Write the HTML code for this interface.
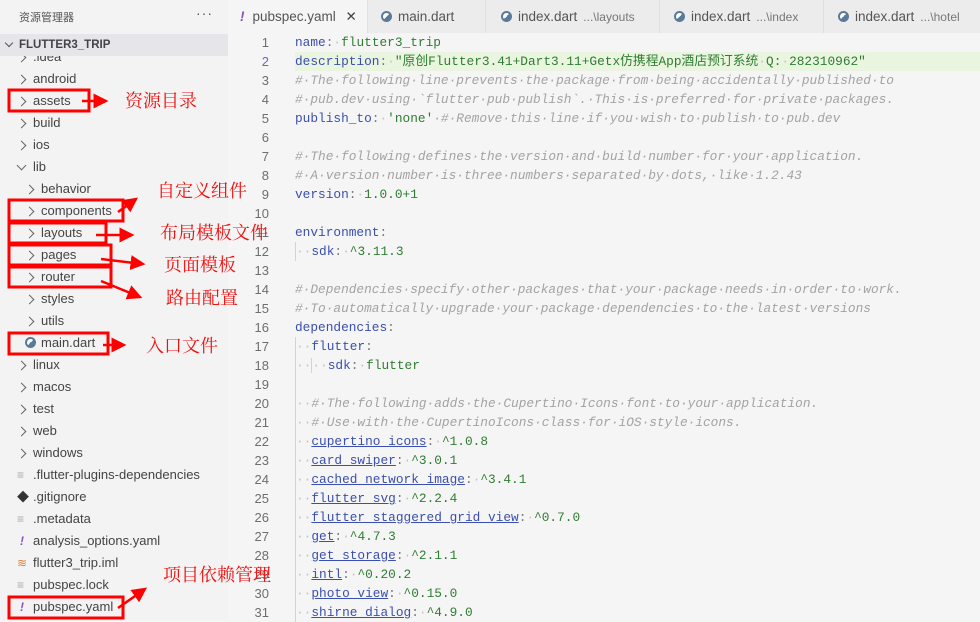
<!DOCTYPE html>
<html><head><meta charset="utf-8"><style>
*{margin:0;padding:0;box-sizing:border-box}
body{width:980px;height:620px;overflow:hidden;background:#f5f5f5;position:relative;font-family:"Liberation Sans","Noto Sans CJK SC",sans-serif}
#side{position:absolute;left:0;top:0;width:228px;height:620px;background:#f3f3f3}
.hdr{position:absolute;left:19px;top:9px;font-size:11px;color:#555}
.dots{position:absolute;left:196px;top:5px;font-size:14px;color:#555;letter-spacing:1px}
.proj{position:absolute;left:0;top:34px;width:228px;height:22px;background:#e5e5ea;font-size:11.5px;font-weight:bold;color:#444;line-height:22px;padding-left:19px;z-index:2}
.proj:before{content:"";position:absolute;left:6px;top:6px;width:5px;height:5px;border-right:1.3px solid #555;border-bottom:1.3px solid #555;transform:rotate(45deg)}
.it{position:absolute;height:22px;line-height:22px;font-size:13px;color:#444;white-space:nowrap}
.ch:before{content:"";position:absolute;left:-15px;top:8px;width:6px;height:6px;border-right:1.2px solid #666;border-top:1.2px solid #666;transform:rotate(45deg)}
.chd:before{content:"";position:absolute;left:-15px;top:6px;width:6px;height:6px;border-right:1.2px solid #666;border-bottom:1.2px solid #666;transform:rotate(45deg)}
.ic{position:absolute;left:-16px;top:0;font-size:12px}
#tabs{position:absolute;left:228px;top:0;width:752px;height:33px;background:#ececec}
.tab{position:absolute;top:0;height:33px;line-height:33px;font-size:13.5px;color:#555;border-right:1px solid #e0e0e0;white-space:nowrap}
.tab small{font-size:12px;color:#777;margin-left:6px}
.dart{display:inline-block;width:11px;height:11px;border-radius:50%;border:2px solid #5a7a9a;margin-right:6px;vertical-align:-1px;background:linear-gradient(135deg,#fff 50%,#5a7a9a 50%)}
#code{position:absolute;left:228px;top:33px;width:752px;font-family:"Liberation Mono","Noto Sans CJK SC",monospace;font-size:12.8px}
.ln{position:relative;height:19px;line-height:19px;white-space:pre}
.n{position:absolute;left:0;width:41px;text-align:right;color:#6e6e6e;font-family:"Liberation Sans",sans-serif;font-size:13px}
.t{position:absolute;left:67px}
.k{color:#3b4fae}.v{color:#2f7d32}.c{color:#a3a3a3;font-style:italic}.d{color:#c4c4c4}.p{color:#777}
.u{color:#3b4fae;text-decoration:underline;text-decoration-color:#3b4fae}
.hl{background:#e9f5df}
.g{border-left:1px solid #d3d3d3}
.ann{position:absolute;color:#f01010;font-family:"Noto Serif CJK SC","Liberation Serif",serif;font-size:18px;white-space:nowrap;line-height:20px}
</style></head><body>
<div id="side">
<div class="hdr">资源管理器</div><div class="dots">···</div>
<div class="proj">FLUTTER3_TRIP</div>
<div class="it ch" style="left:33px;top:46px">.idea</div>
<div class="it ch" style="left:33px;top:68px">android</div>
<div class="it ch" style="left:33px;top:90px">assets</div>
<div class="it ch" style="left:33px;top:112px">build</div>
<div class="it ch" style="left:33px;top:134px">ios</div>
<div class="it chd" style="left:33px;top:156px">lib</div>
<div class="it ch" style="left:41px;top:178px">behavior</div>
<div class="it ch" style="left:41px;top:200px">components</div>
<div class="it ch" style="left:41px;top:222px">layouts</div>
<div class="it ch" style="left:41px;top:244px">pages</div>
<div class="it ch" style="left:41px;top:266px">router</div>
<div class="it ch" style="left:41px;top:288px">styles</div>
<div class="it ch" style="left:41px;top:310px">utils</div>
<div class="it" style="left:41px;top:332px"><span class="ic" style="top:5px;width:11px;height:11px;border-radius:50%;border:2px solid #5a7a9a;background:linear-gradient(135deg,#fff 50%,#5a7a9a 50%)"></span>main.dart</div>
<div class="it ch" style="left:33px;top:354px">linux</div>
<div class="it ch" style="left:33px;top:376px">macos</div>
<div class="it ch" style="left:33px;top:398px">test</div>
<div class="it ch" style="left:33px;top:420px">web</div>
<div class="it ch" style="left:33px;top:442px">windows</div>
<div class="it" style="left:33px;top:464px"><span class="ic" style="color:#aaa">≡</span>.flutter-plugins-dependencies</div>
<div class="it" style="left:33px;top:486px"><span class="ic" style="color:#333">◆</span>.gitignore</div>
<div class="it" style="left:33px;top:508px"><span class="ic" style="color:#aaa">≡</span>.metadata</div>
<div class="it" style="left:33px;top:530px"><span class="ic" style="color:#8a4fb8;font-weight:bold;font-style:italic;left:-13px">!</span>analysis_options.yaml</div>
<div class="it" style="left:33px;top:552px"><span class="ic" style="color:#e0823a">≋</span>flutter3_trip.iml</div>
<div class="it" style="left:33px;top:574px"><span class="ic" style="color:#aaa">≡</span>pubspec.lock</div>
<div class="it" style="left:33px;top:596px"><span class="ic" style="color:#8a4fb8;font-weight:bold;font-style:italic;left:-13px">!</span>pubspec.yaml</div>
</div>
<div id="tabs">
<div class="tab" style="left:0;width:140px;background:#f5f5f5;padding-left:12px"><span style="color:#8a4fb8;font-weight:bold;font-style:italic;margin-right:8px">!</span>pubspec.yaml <span style="margin-left:6px;color:#444">✕</span></div>
<div class="tab" style="left:140px;width:118px;padding-left:13px"><span class="dart"></span>main.dart</div>
<div class="tab" style="left:258px;width:174px;padding-left:15px"><span class="dart"></span>index.dart<small>...\layouts</small></div>
<div class="tab" style="left:432px;width:164px;padding-left:14px"><span class="dart"></span>index.dart<small>...\index</small></div>
<div class="tab" style="left:596px;width:156px;padding-left:14px;border:none"><span class="dart"></span>index.dart<small>...\hotel</small></div>
</div>
<div id="code">
<div class="ln" style="margin-top:0"><span class="n">1</span><span class="t"><span class="k">name</span><span class="p">:</span><span class="d">·</span><span class="v">flutter3_trip</span></span></div>
<div class="ln"><span class="n" style="color:#7a5fc0">2</span><span class="t hl" style="width:685px"><span class="k">description</span><span class="p">:</span><span class="d">·</span><span class="v">"原创Flutter3.41+Dart3.11+Getx仿携程App酒店预订系统<span class="d">·</span>Q:<span class="d">·</span>282310962"</span></span></div>
<div class="ln"><span class="n">3</span><span class="t c">#·The·following·line·prevents·the·package·from·being·accidentally·published·to</span></div>
<div class="ln"><span class="n">4</span><span class="t c">#·pub.dev·using·`flutter·pub·publish`.·This·is·preferred·for·private·packages.</span></div>
<div class="ln"><span class="n">5</span><span class="t"><span class="k">publish_to</span><span class="p">:</span><span class="d">·</span><span class="v">'none'</span><span class="c">·#·Remove·this·line·if·you·wish·to·publish·to·pub.dev</span></span></div>
<div class="ln"><span class="n">6</span></div>
<div class="ln"><span class="n">7</span><span class="t c">#·The·following·defines·the·version·and·build·number·for·your·application.</span></div>
<div class="ln"><span class="n">8</span><span class="t c">#·A·version·number·is·three·numbers·separated·by·dots,·like·1.2.43</span></div>
<div class="ln"><span class="n">9</span><span class="t"><span class="k">version</span><span class="p">:</span><span class="d">·</span><span class="v">1.0.0+1</span></span></div>
<div class="ln"><span class="n">10</span></div>
<div class="ln"><span class="n">11</span><span class="t"><span class="k">environment</span><span class="p">:</span></span></div>
<div class="ln"><span class="n">12</span><span class="t g"><span class="d">··</span><span class="k">sdk</span><span class="p">:</span><span class="d">·</span><span class="v">^3.11.3</span></span></div>
<div class="ln"><span class="n">13</span></div>
<div class="ln"><span class="n">14</span><span class="t c">#·Dependencies·specify·other·packages·that·your·package·needs·in·order·to·work.</span></div>
<div class="ln"><span class="n">15</span><span class="t c">#·To·automatically·upgrade·your·package·dependencies·to·the·latest·versions</span></div>
<div class="ln"><span class="n">16</span><span class="t"><span class="k">dependencies</span><span class="p">:</span></span></div>
<div class="ln"><span class="n">17</span><span class="t g"><span class="d">··</span><span class="k">flutter</span><span class="p">:</span></span></div>
<div class="ln"><span class="n">18</span><span class="t g"><span class="d">··</span><span class="g"><span class="d">··</span></span><span class="k">sdk</span><span class="p">:</span><span class="d">·</span><span class="v">flutter</span></span></div>
<div class="ln"><span class="n">19</span><span class="t g">&nbsp;</span></div>
<div class="ln"><span class="n">20</span><span class="t g"><span class="d">··</span><span class="c">#·The·following·adds·the·Cupertino·Icons·font·to·your·application.</span></span></div>
<div class="ln"><span class="n">21</span><span class="t g"><span class="d">··</span><span class="c">#·Use·with·the·CupertinoIcons·class·for·iOS·style·icons.</span></span></div>
<div class="ln"><span class="n">22</span><span class="t g"><span class="d">··</span><span class="u">cupertino_icons</span><span class="p">:</span><span class="d">·</span><span class="v">^1.0.8</span></span></div>
<div class="ln"><span class="n">23</span><span class="t g"><span class="d">··</span><span class="u">card_swiper</span><span class="p">:</span><span class="d">·</span><span class="v">^3.0.1</span></span></div>
<div class="ln"><span class="n">24</span><span class="t g"><span class="d">··</span><span class="u">cached_network_image</span><span class="p">:</span><span class="d">·</span><span class="v">^3.4.1</span></span></div>
<div class="ln"><span class="n">25</span><span class="t g"><span class="d">··</span><span class="u">flutter_svg</span><span class="p">:</span><span class="d">·</span><span class="v">^2.2.4</span></span></div>
<div class="ln"><span class="n">26</span><span class="t g"><span class="d">··</span><span class="u">flutter_staggered_grid_view</span><span class="p">:</span><span class="d">·</span><span class="v">^0.7.0</span></span></div>
<div class="ln"><span class="n">27</span><span class="t g"><span class="d">··</span><span class="u">get</span><span class="p">:</span><span class="d">·</span><span class="v">^4.7.3</span></span></div>
<div class="ln"><span class="n">28</span><span class="t g"><span class="d">··</span><span class="u">get_storage</span><span class="p">:</span><span class="d">·</span><span class="v">^2.1.1</span></span></div>
<div class="ln"><span class="n">29</span><span class="t g"><span class="d">··</span><span class="u">intl</span><span class="p">:</span><span class="d">·</span><span class="v">^0.20.2</span></span></div>
<div class="ln"><span class="n">30</span><span class="t g"><span class="d">··</span><span class="u">photo_view</span><span class="p">:</span><span class="d">·</span><span class="v">^0.15.0</span></span></div>
<div class="ln"><span class="n">31</span><span class="t g"><span class="d">··</span><span class="u">shirne_dialog</span><span class="p">:</span><span class="d">·</span><span class="v">^4.9.0</span></span></div>
</div>
<svg style="position:absolute;left:0;top:0" width="980" height="620">
<defs><marker id="a" markerWidth="6" markerHeight="6" refX="5" refY="3" orient="auto" markerUnits="strokeWidth"><path d="M0,0 L6,3 L0,6 z" fill="#f00"/></marker></defs>
<g fill="none" stroke="#f00" stroke-width="3">
<rect x="9" y="90" width="80" height="21"/>
<rect x="9" y="200" width="114" height="21"/>
<rect x="9" y="223" width="97" height="20"/>
<rect x="9" y="245" width="102" height="20"/>
<rect x="9" y="267" width="102" height="20"/>
<rect x="9" y="333" width="99" height="21"/>
<rect x="9" y="597" width="114" height="21"/>
</g>
<g stroke="#f00" stroke-width="2.5" marker-end="url(#a)">
<line x1="82" y1="101" x2="106" y2="101"/>
<line x1="118" y1="212" x2="136" y2="199"/>
<line x1="96" y1="235" x2="132" y2="235"/>
<line x1="101" y1="259" x2="143" y2="264"/>
<line x1="101" y1="281" x2="140" y2="297"/>
<line x1="103" y1="345" x2="124" y2="345"/>
<line x1="118" y1="608" x2="145" y2="589"/>
</g>
</svg>
<div class="ann" style="left:125px;top:90px">资源目录</div>
<div class="ann" style="left:157px;top:180px">自定义组件</div>
<div class="ann" style="left:160px;top:222px">布局模板文件</div>
<div class="ann" style="left:164px;top:254px">页面模板</div>
<div class="ann" style="left:166px;top:287px">路由配置</div>
<div class="ann" style="left:146px;top:335px">入口文件</div>
<div class="ann" style="left:163px;top:564px">项目依赖管理</div>
</body></html>
